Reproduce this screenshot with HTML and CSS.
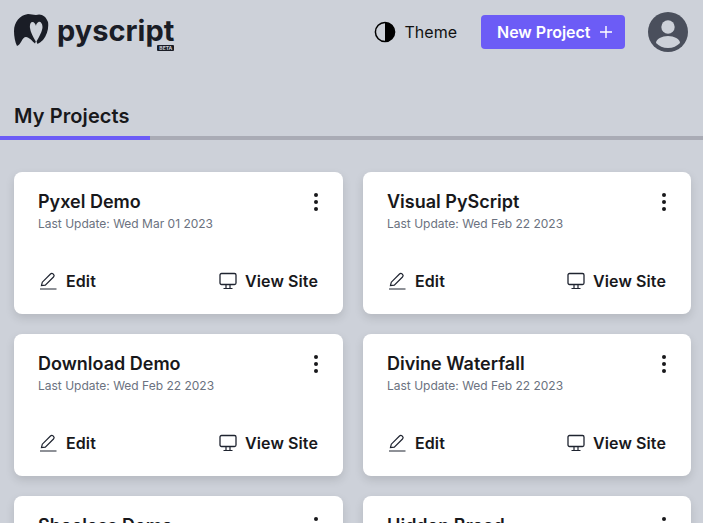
FILE: index.html
```html
<!DOCTYPE html>
<html lang="en">
<head>
    <meta charset="UTF-8">
    <meta name="viewport" content="width=device-width, initial-scale=1.0">
    <title>My Projects</title>
    <link rel="stylesheet" href="styles.css">
</head>
<body>
    <header class="topbar">
        <div class="logo">
            <svg class="logo-mark" viewBox="14 14 36 34" width="36" height="34">
                <path fill="#1a1d26" d="M17 46C15 42 14 36 14 31C14 22 20 15 28 14C31 14 33 15 36 15C41 13 46 16 48 22C49 28 47 35 43 40C41 42 39 43 37.500 44L36.500 41.500C39 37 42.500 31 42.500 27C42.500 23 40 21 38.500 22C37 23 36 24 36 26C35.500 24 34 22 32.500 22C30.500 22 29.500 25 30 28C30.500 32 33 37 35.800 41.500L35 43.500C32 41 29 37 26 37C22 37 21 45 17 46Z"/>
            </svg>
            <div class="logo-text">
                <span class="logo-name">pyscript</span>
                <span class="logo-beta">BETA</span>
            </div>
        </div>
        <div class="actions">
            <button class="theme-btn">
                <svg viewBox="0 0 22 22" width="22" height="22">
                    <circle cx="11" cy="11" r="9.6" fill="none" stroke="#000" stroke-width="1.5"/>
                    <path d="M11 1.400a9.600 9.600 0 0 1 0 19.200z" fill="#000"/>
                </svg>
                Theme
            </button>
            <button class="new-btn">
                New Project
                <svg viewBox="0 0 14 14" width="14" height="14">
                    <path d="M7 1v12M1 7h12" stroke="#fff" stroke-width="1.4" fill="none"/>
                </svg>
            </button>
            <svg class="avatar" viewBox="0 0 40 40" width="40" height="40">
                <circle cx="20" cy="20" r="20" fill="#4a4f5c"/>
                <circle cx="20" cy="15" r="6.7" fill="#cdd1d9"/>
                <path d="M8 31c0-4 6-7 12-7s12 3 12 7c-3 3-7 5-12 5s-9-2-12-5z" fill="#cdd1d9"/>
            </svg>
        </div>
    </header>

    <nav class="tabs">
        <div class="tab">My Projects</div>
    </nav>

    <main class="grid">
        <article class="card">
            <div class="card-top">
                <div>
                    <h2>Pyxel Demo</h2>
                    <p>Last Update: Wed Mar 01 2023</p>
                </div>
                <span class="dots"><i></i><i></i><i></i></span>
            </div>
            <div class="card-links">
                <a><svg class="ico"><use href="#pencil"/></svg>Edit</a>
                <a class="view"><svg class="ico"><use href="#monitor"/></svg>View Site</a>
            </div>
        </article>
        <article class="card">
            <div class="card-top">
                <div>
                    <h2>Visual PyScript</h2>
                    <p>Last Update: Wed Feb 22 2023</p>
                </div>
                <span class="dots"><i></i><i></i><i></i></span>
            </div>
            <div class="card-links">
                <a><svg class="ico"><use href="#pencil"/></svg>Edit</a>
                <a class="view"><svg class="ico"><use href="#monitor"/></svg>View Site</a>
            </div>
        </article>
        <article class="card">
            <div class="card-top">
                <div>
                    <h2>Download Demo</h2>
                    <p>Last Update: Wed Feb 22 2023</p>
                </div>
                <span class="dots"><i></i><i></i><i></i></span>
            </div>
            <div class="card-links">
                <a><svg class="ico"><use href="#pencil"/></svg>Edit</a>
                <a class="view"><svg class="ico"><use href="#monitor"/></svg>View Site</a>
            </div>
        </article>
        <article class="card">
            <div class="card-top">
                <div>
                    <h2>Divine Waterfall</h2>
                    <p>Last Update: Wed Feb 22 2023</p>
                </div>
                <span class="dots"><i></i><i></i><i></i></span>
            </div>
            <div class="card-links">
                <a><svg class="ico"><use href="#pencil"/></svg>Edit</a>
                <a class="view"><svg class="ico"><use href="#monitor"/></svg>View Site</a>
            </div>
        </article>
        <article class="card">
            <div class="card-top">
                <div>
                    <h2>Shoeless Demo</h2>
                    <p>Last Update: Wed Feb 22 2023</p>
                </div>
                <span class="dots"><i></i><i></i><i></i></span>
            </div>
            <div class="card-links">
                <a><svg class="ico"><use href="#pencil"/></svg>Edit</a>
                <a class="view"><svg class="ico"><use href="#monitor"/></svg>View Site</a>
            </div>
        </article>
        <article class="card">
            <div class="card-top">
                <div>
                    <h2>Hidden Bread</h2>
                    <p>Last Update: Wed Feb 22 2023</p>
                </div>
                <span class="dots"><i></i><i></i><i></i></span>
            </div>
            <div class="card-links">
                <a><svg class="ico"><use href="#pencil"/></svg>Edit</a>
                <a class="view"><svg class="ico"><use href="#monitor"/></svg>View Site</a>
            </div>
        </article>
    </main>

    <svg class="defs" width="0" height="0">
        <symbol id="pencil" viewBox="0 0 18 18">
            <path d="M1 17h16.500M2.500 13.500l.8-3.300L11.500 2c.8-.8 1.800-.8 2.500-.1l.6.6c.7.7.7 1.700-.1 2.500L6.300 13.200l-3.800.3z" fill="none" stroke="#1f2430" stroke-width="1.200"/>
        </symbol>
        <symbol id="monitor" viewBox="0 0 18 18">
            <rect x="1" y="1.500" width="16" height="11" rx="1.500" fill="none" stroke="#1f2430" stroke-width="1.300"/>
            <path d="M7 12.500v3.500M11 12.500v3.500M4.500 16.500h9" fill="none" stroke="#1f2430" stroke-width="1.200"/>
        </symbol>
    </svg>
</body>
</html>
```

FILE: styles.css
```css
html, body {
    height: 523px;
    overflow: hidden;
}
body {
    margin: 0;
    background: #cdd1d9;
    color: #18181b;
    font-family: "Inter", "Liberation Sans", sans-serif;
}
button {
    font-family: inherit;
    border: none;
    cursor: pointer;
}
.topbar {
    display: flex;
    justify-content: space-between;
    align-items: center;
    height: 64px;
    padding: 0 15px 0 14px;
}
.logo {
    display: flex;
    align-items: flex-start;
    gap: 7px;
    margin-top: -2px;
}
.logo-text {
    position: relative;
}
.logo-name {
    display: block;
    font-size: 29px;
    font-weight: 700;
    line-height: 34px;
    color: #1a1d26;
}
.logo-beta {
    position: absolute;
    right: 0;
    bottom: -3px;
    padding: 0 2px;
    background: #1a1d26;
    color: #cdd1d9;
    font-size: 5px;
    font-weight: 700;
    line-height: 6px;
    border-radius: 1px;
}
.actions {
    display: flex;
    align-items: center;
}
.theme-btn {
    display: flex;
    align-items: center;
    gap: 9px;
    margin-right: 24px;
    padding: 0;
    background: none;
    color: #111;
    font-size: 16px;
}
.new-btn {
    display: flex;
    align-items: center;
    gap: 8px;
    width: 144px;
    height: 34px;
    margin-right: 23px;
    padding: 0 0 0 16px;
    background: #6c5cf6;
    color: #fff;
    font-size: 16px;
    font-weight: 600;
    border-radius: 4px;
}
.tabs {
    height: 76px;
    box-sizing: border-box;
    border-bottom: 4px solid #a9abb5;
    margin-bottom: 32px;
}
.tab {
    display: flex;
    align-items: flex-end;
    box-sizing: border-box;
    width: 150px;
    height: 76px;
    padding: 0 0 8px 14px;
    border-bottom: 4px solid #6c5cf6;
    font-size: 20px;
    font-weight: 600;
    line-height: 24px;
    letter-spacing: 0.1px;
}
.grid {
    display: grid;
    grid-template-columns: 329px 328px;
    gap: 20px;
    padding-left: 14px;
}
.card {
    display: flex;
    flex-direction: column;
    justify-content: space-between;
    height: 142px;
    box-sizing: border-box;
    padding: 19px 25px 23px 24px;
    background: #fff;
    border-radius: 8px;
    box-shadow: 0 4px 10px rgba(0, 0, 0, 0.12);
}
.card-top {
    display: flex;
    justify-content: space-between;
}
.card h2 {
    margin: 0;
    font-size: 18px;
    font-weight: 600;
    line-height: 22px;
}
.card p {
    margin: 3px 0 0;
    font-size: 12px;
    line-height: 16px;
    color: #6b7280;
}
.dots {
    display: flex;
    flex-direction: column;
    gap: 3px;
    padding-top: 2px;
}
.dots i {
    width: 4px;
    height: 4px;
    border-radius: 50%;
    background: #18181b;
}
.card-links {
    display: flex;
    justify-content: space-between;
}
.card-links a {
    display: flex;
    align-items: center;
    gap: 9px;
    font-size: 16px;
    font-weight: 600;
    line-height: 20px;
    letter-spacing: 0.1px;
}
.card-links a:first-child {
    margin-left: 1px;
}
.card-links .view {
    gap: 8px;
}
.ico {
    width: 18px;
    height: 18px;
}
.defs {
    position: absolute;
}
```
